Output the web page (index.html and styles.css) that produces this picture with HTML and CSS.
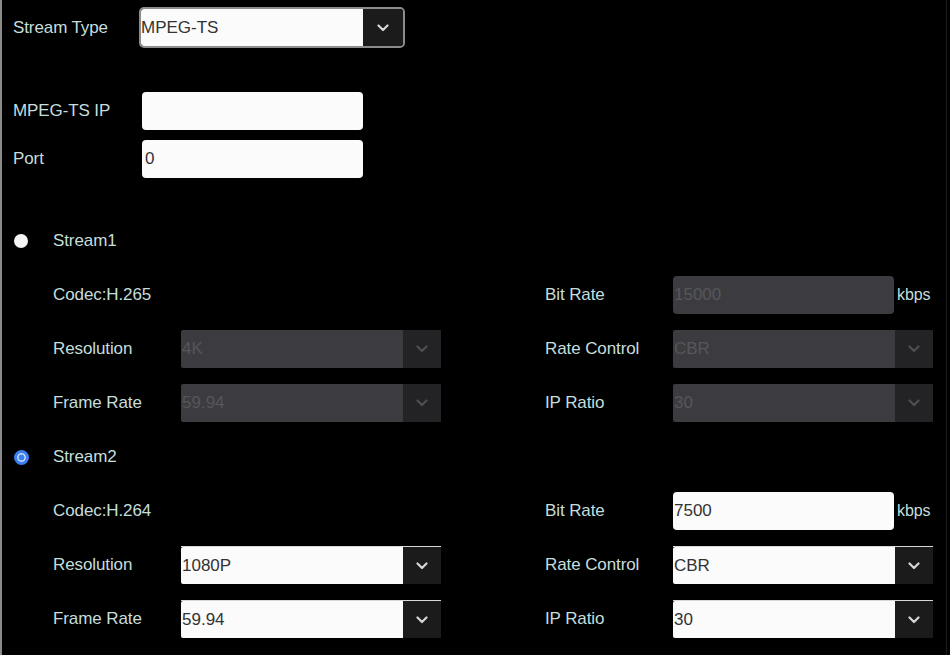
FILE: index.html
```html
<!DOCTYPE html>
<html lang="en">
<head>
  <meta charset="UTF-8">
  <meta name="viewport" content="width=device-width, initial-scale=1.0">
  <title>Stream Settings</title>
  <link rel="stylesheet" href="styles.css">
</head>
<body>
  <div class="page">
    <!-- Output type -->
    <div class="field type-row">
      <span class="label">Stream Type</span>
      <div class="select select-framed">
        <span class="value">MPEG-TS</span>
        <span class="arrow"><svg viewBox="0 0 12 8"><path d="M1.5 1.5 6 6 10.5 1.5"/></svg></span>
      </div>
    </div>

    <div class="field ip-row">
      <span class="label">MPEG-TS IP</span>
      <input class="text-input" type="text" value="">
    </div>
    <div class="field port-row">
      <span class="label">Port</span>
      <input class="text-input" type="text" value="0">
    </div>

    <!-- Stream 1 (not selected, fields disabled) -->
    <div class="stream stream-first">
      <div class="stream-head">
        <span class="radio"></span>
        <span class="label">Stream1</span>
      </div>
      <div class="stream-grid disabled">
        <span class="label codec">Codec:H.265</span>
        <span class="label col-r">Bit Rate</span>
        <div class="unit-box">
          <span class="text-box">15000</span>
          <span class="label unit">kbps</span>
        </div>

        <span class="label">Resolution</span>
        <div class="select">
          <span class="value">4K</span>
          <span class="arrow"><svg viewBox="0 0 12 8"><path d="M1.5 1.5 6 6 10.5 1.5"/></svg></span>
        </div>
        <span class="label col-r">Rate Control</span>
        <div class="select">
          <span class="value">CBR</span>
          <span class="arrow"><svg viewBox="0 0 12 8"><path d="M1.5 1.5 6 6 10.5 1.5"/></svg></span>
        </div>

        <span class="label">Frame Rate</span>
        <div class="select">
          <span class="value">59.94</span>
          <span class="arrow"><svg viewBox="0 0 12 8"><path d="M1.5 1.5 6 6 10.5 1.5"/></svg></span>
        </div>
        <span class="label col-r">IP Ratio</span>
        <div class="select">
          <span class="value">30</span>
          <span class="arrow"><svg viewBox="0 0 12 8"><path d="M1.5 1.5 6 6 10.5 1.5"/></svg></span>
        </div>
      </div>
    </div>

    <!-- Stream 2 (selected) -->
    <div class="stream">
      <div class="stream-head">
        <span class="radio checked"></span>
        <span class="label">Stream2</span>
      </div>
      <div class="stream-grid">
        <span class="label codec">Codec:H.264</span>
        <span class="label col-r">Bit Rate</span>
        <div class="unit-box">
          <span class="text-box">7500</span>
          <span class="label unit">kbps</span>
        </div>

        <span class="label">Resolution</span>
        <div class="select">
          <span class="value">1080P</span>
          <span class="arrow"><svg viewBox="0 0 12 8"><path d="M1.5 1.5 6 6 10.5 1.5"/></svg></span>
        </div>
        <span class="label col-r">Rate Control</span>
        <div class="select">
          <span class="value">CBR</span>
          <span class="arrow"><svg viewBox="0 0 12 8"><path d="M1.5 1.5 6 6 10.5 1.5"/></svg></span>
        </div>

        <span class="label">Frame Rate</span>
        <div class="select">
          <span class="value">59.94</span>
          <span class="arrow"><svg viewBox="0 0 12 8"><path d="M1.5 1.5 6 6 10.5 1.5"/></svg></span>
        </div>
        <span class="label col-r">IP Ratio</span>
        <div class="select">
          <span class="value">30</span>
          <span class="arrow"><svg viewBox="0 0 12 8"><path d="M1.5 1.5 6 6 10.5 1.5"/></svg></span>
        </div>
      </div>
    </div>
  </div>
</body>
</html>
```

FILE: styles.css
```css
html, body {
  margin: 0;
  background: #000;
}

body {
  font-family: "Liberation Sans", Arial, sans-serif;
  font-size: 17px;
  color: #c4dedd;
}

.page {
  width: 947px;
  height: 655px;
  border-left: 2px solid #8a8a8a;
  border-right: 1px solid #1c1c1c;
  box-sizing: border-box;
  padding-top: 7px;
  overflow: hidden;
}

.label {
  color: #c4dedd;
  white-space: nowrap;
  letter-spacing: -0.1px;
}

/* top fields */
.field {
  display: grid;
  grid-template-columns: 129px auto;
  align-items: center;
  padding-left: 11px;
}

.field.type-row {
  grid-template-columns: 126px auto;
}

.ip-row {
  margin-top: 44px;
}

.port-row {
  margin-top: 10px;
}

.text-input {
  width: 221px;
  height: 38px;
  box-sizing: border-box;
  border: none;
  border-radius: 4px;
  background: #fbfbfb;
  padding: 0 3px;
  font: inherit;
  color: #333;
  outline: none;
}

/* select boxes */
.select {
  display: flex;
  width: 260px;
  height: 38px;
  border-top: 1px solid #d8d8d8;
  box-sizing: border-box;
}

.select .value {
  flex: 1;
  display: flex;
  align-items: center;
  background: #fbfbfb;
  color: #333;
  padding-left: 1px;
  border-radius: 2px 0 0 2px;
}

.select .arrow {
  width: 38px;
  display: flex;
  align-items: center;
  justify-content: center;
  background: #1b1b1b;
}

.arrow svg {
  width: 12px;
  height: 8px;
  fill: none;
  stroke: #d6d6d6;
  stroke-width: 2.2;
  stroke-linecap: round;
  stroke-linejoin: round;
}

.select-framed {
  width: 266px;
  height: 41px;
  border: 2px solid #8c8c8c;
  border-radius: 5px;
  overflow: hidden;
}

.select-framed .value {
  padding-left: 0;
}

.select-framed .arrow {
  width: 40px;
}

/* streams */
.stream {
  padding-left: 12px;
}

.stream-first {
  margin-top: 44px;
}

.stream-head {
  display: flex;
  align-items: center;
  height: 38px;
}

.radio {
  width: 14px;
  height: 14px;
  border-radius: 50%;
  background: #f4f4f4;
  margin-right: 25px;
  box-sizing: border-box;
}

.radio.checked {
  width: 15px;
  height: 15px;
  margin-right: 24px;
  background: #3b7ff0;
  border: 3px solid #3b7ff0;
  box-shadow: inset 0 0 0 1.5px #d4e4ff;
}

.stream-grid {
  display: grid;
  grid-template-columns: 128px 260px 104px 128px auto;
  grid-auto-rows: 38px;
  row-gap: 16px;
  align-items: center;
  padding-left: 39px;
  margin-top: 16px;
  margin-bottom: 16px;
}

.codec {
  grid-column: 1 / 4;
}

.col-r {
  grid-column: 4;
}

.unit-box {
  display: flex;
  align-items: center;
  gap: 3px;
}

.text-box {
  display: flex;
  align-items: center;
  width: 221px;
  height: 38px;
  box-sizing: border-box;
  border-radius: 4px;
  background: #fbfbfb;
  color: #333;
  padding-left: 1px;
}

.unit {
  font-size: 16px;
}

/* greyed out stream */
.disabled .text-box,
.disabled .select .value {
  background: #3c3c40;
  color: #56565b;
}

.disabled .select {
  border-top: none;
}

.disabled .select .arrow {
  background: #232325;
}

.disabled .arrow svg {
  stroke: #4e4e52;
}
```
